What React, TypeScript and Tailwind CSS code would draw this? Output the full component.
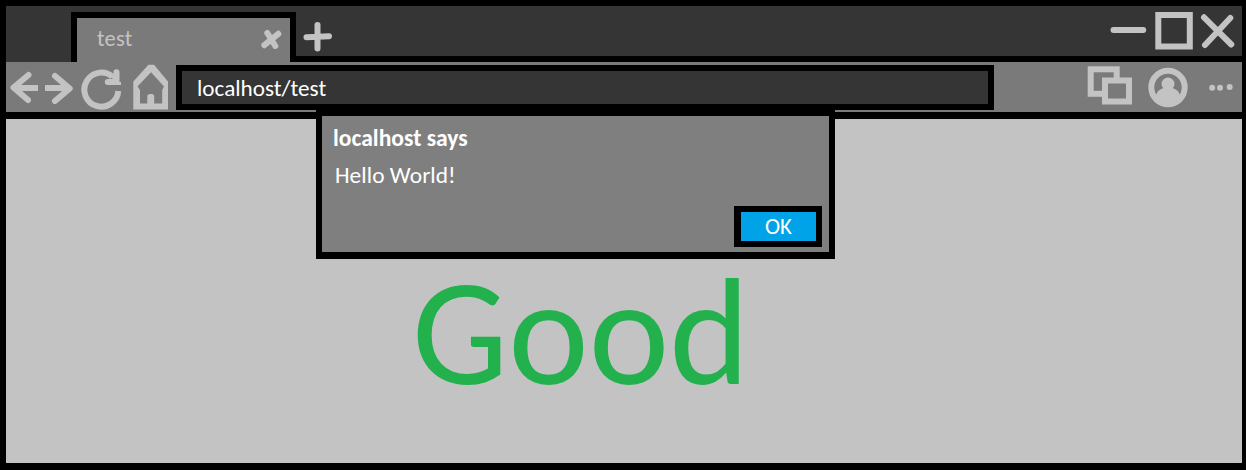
import React from "react";

const ink = "#c3c3c3";

function BackIcon() {
  return (
    <svg width="30" height="34" viewBox="9 70 30 34" fill="none" stroke={ink} strokeWidth="6" strokeLinecap="round" strokeLinejoin="round" className="shrink-0">
      <path d="M28.5 75 13.5 87.5 28 100" />
      <path d="M14 88H38" strokeLinecap="butt" />
    </svg>
  );
}

function ForwardIcon() {
  return (
    <svg width="30" height="34" viewBox="44 70 30 34" fill="none" stroke={ink} strokeWidth="6" strokeLinecap="round" strokeLinejoin="round" className="shrink-0">
      <path d="M55 76 69.7 88.5 55 101" />
      <path d="M45 88H69" strokeLinecap="butt" />
    </svg>
  );
}

function ReloadIcon() {
  return (
    <svg width="42" height="42" viewBox="81 69 42 42" fill="none" stroke={ink} strokeWidth="6" strokeLinejoin="round" className="shrink-0">
      <path d="M112.5 76.8A17 17 0 1 0 118.3 91" />
      <path d="M116.5 72.3V82H107.8" strokeLinecap="round" />
      <path d="M111 75 117 81V83.5H121" strokeWidth="3" strokeLinejoin="miter" />
    </svg>
  );
}

function HomeIcon() {
  return (
    <svg width="36" height="47" viewBox="133 64 36 47" className="shrink-0">
      <path
        fillRule="evenodd"
        fill={ink}
        d="M148.5 64.8H154L168 81.5V109.5H133.3V81.5ZM151 72.3 137.5 86.5 140 90V103.5H147.3V95.5L149.3 94H152.5L154.2 95.5V103.5H162.2V90L164 86.5Z"
      />
    </svg>
  );
}

function CloseTabIcon() {
  return (
    <svg width="22" height="20" viewBox="260 29 22 20" fill="none" stroke={ink} strokeWidth="6" strokeLinecap="round" className="shrink-0">
      <path d="M267.3 33 275.3 46M278.3 33.8 264.3 45.2" />
    </svg>
  );
}

function NewTabIcon() {
  return (
    <svg width="30" height="30" viewBox="303 22 30 30" fill="none" stroke={ink} strokeWidth="6" strokeLinecap="round" className="shrink-0">
      <path d="M317.5 25V48.5M306.5 37.2 329 36.2" />
    </svg>
  );
}

function WindowControls() {
  return (
    <svg width="127" height="40" viewBox="1109 11 127 40" fill="none" stroke={ink} strokeWidth="6" strokeLinecap="round" className="shrink-0">
      <path d="M1113.5 30H1143.2" />
      <rect x="1158.3" y="15" width="31.5" height="31.5" />
      <path d="M1204 17.3 1231.3 44.5M1230.3 18 1205 45" />
    </svg>
  );
}

function ToolbarIcons() {
  return (
    <svg width="147" height="44" viewBox="1087 65 147 44" fill="none" stroke={ink} strokeWidth="6" className="shrink-0">
      <rect x="1090.7" y="69.3" width="26" height="24.5" />
      <rect x="1105" y="80.5" width="24" height="21" fill="#7a7a7a" />
      <circle cx="1168" cy="87.5" r="16.7" />
      <circle cx="1168" cy="84" r="6.5" fill={ink} stroke="none" />
      <path d="M1155.5 97.5C1156.5 90 1162 87.5 1168 87.5S1179.5 90 1180.5 97.5L1174 103H1162Z" fill={ink} stroke="none" />
      <g fill={ink} stroke="none">
        <circle cx="1212.2" cy="87.7" r="3" />
        <circle cx="1220" cy="87.7" r="3" />
        <circle cx="1229.7" cy="87" r="3" />
      </g>
    </svg>
  );
}

function TabStrip() {
  return (
    <header className="flex h-[56px] shrink-0 items-start bg-[#353535] pl-[65px]">
      <div className="mt-[6px] h-[50px] w-[225px] border-x-[6px] border-t-[6px] border-black bg-[#7a7a7a]">
        <div className="flex h-[44px] justify-between pl-[20px] pr-[8px] pt-[11px]">
          <span className="mt-[-1px] text-[22.5px] leading-[22px] tracking-[0.2px] text-[#c3c3c3]">test</span>
          <CloseTabIcon />
        </div>
      </div>
      <div className="flex h-[56px] flex-1 items-start justify-between border-b-[6px] border-black pl-[7px] pr-[6px]">
        <div className="pt-[16px]"><NewTabIcon /></div>
        <div className="pt-[5px]"><WindowControls /></div>
      </div>
    </header>
  );
}

function Toolbar() {
  return (
    <nav className="flex h-[50px] shrink-0 items-start bg-[#7a7a7a]">
      <div className="flex w-[170px] shrink-0 items-start pl-[3px]">
        <div className="pt-[8px]"><BackIcon /></div>
        <div className="ml-[5px] pt-[8px]"><ForwardIcon /></div>
        <div className="ml-[7px] pt-[7px]"><ReloadIcon /></div>
        <div className="ml-[10px] pt-[2px]"><HomeIcon /></div>
      </div>
      <div className="mt-[3px] h-[45px] w-[818px] shrink-0 border-[6px] border-black bg-[#353535] pl-[15px] pt-[5px]">
        <span className="block whitespace-nowrap text-[23.2px] leading-[24px] text-white">localhost/test</span>
      </div>
      <div className="ml-[93px] pt-[3px]"><ToolbarIcons /></div>
    </nav>
  );
}

function AlertDialog() {
  return (
    <div role="dialog" className="absolute left-[316px] top-[110px] flex h-[149px] w-[519px] flex-col border-[6px] border-b-[7px] border-black bg-[#7f7f7f] pl-[11px] pr-[7px]">
      <h2 className="mt-[9px] whitespace-nowrap text-[23.6px] font-bold leading-[26px] text-white">localhost says</h2>
      <p className="ml-[2px] mt-[11px] whitespace-nowrap text-[23.4px] leading-[26px] tracking-[0.05px] text-white">Hello World!</p>
      <button className="mt-[18px] h-[41px] w-[88px] shrink-0 self-end border-[6px] border-l-[7px] border-black bg-[#00a2e8] text-center text-[22.8px] leading-[29px] text-white">OK</button>
    </div>
  );
}

export default function App() {
  return (
    <div className="relative flex h-[470px] w-[1246px] flex-col overflow-hidden bg-black pb-[7px] pl-[6px] pr-[4px] pt-[6px] font-['Carlito','Lato',sans-serif]">
      <TabStrip />
      <Toolbar />
      <main className="mt-[7px] flex-1 bg-[#c3c3c3] pl-[406px] pt-[123px]">
        <h1 className="whitespace-nowrap text-[152.6px] leading-[180px] text-[#22b14c]">Good</h1>
      </main>
      <AlertDialog />
    </div>
  );
}
